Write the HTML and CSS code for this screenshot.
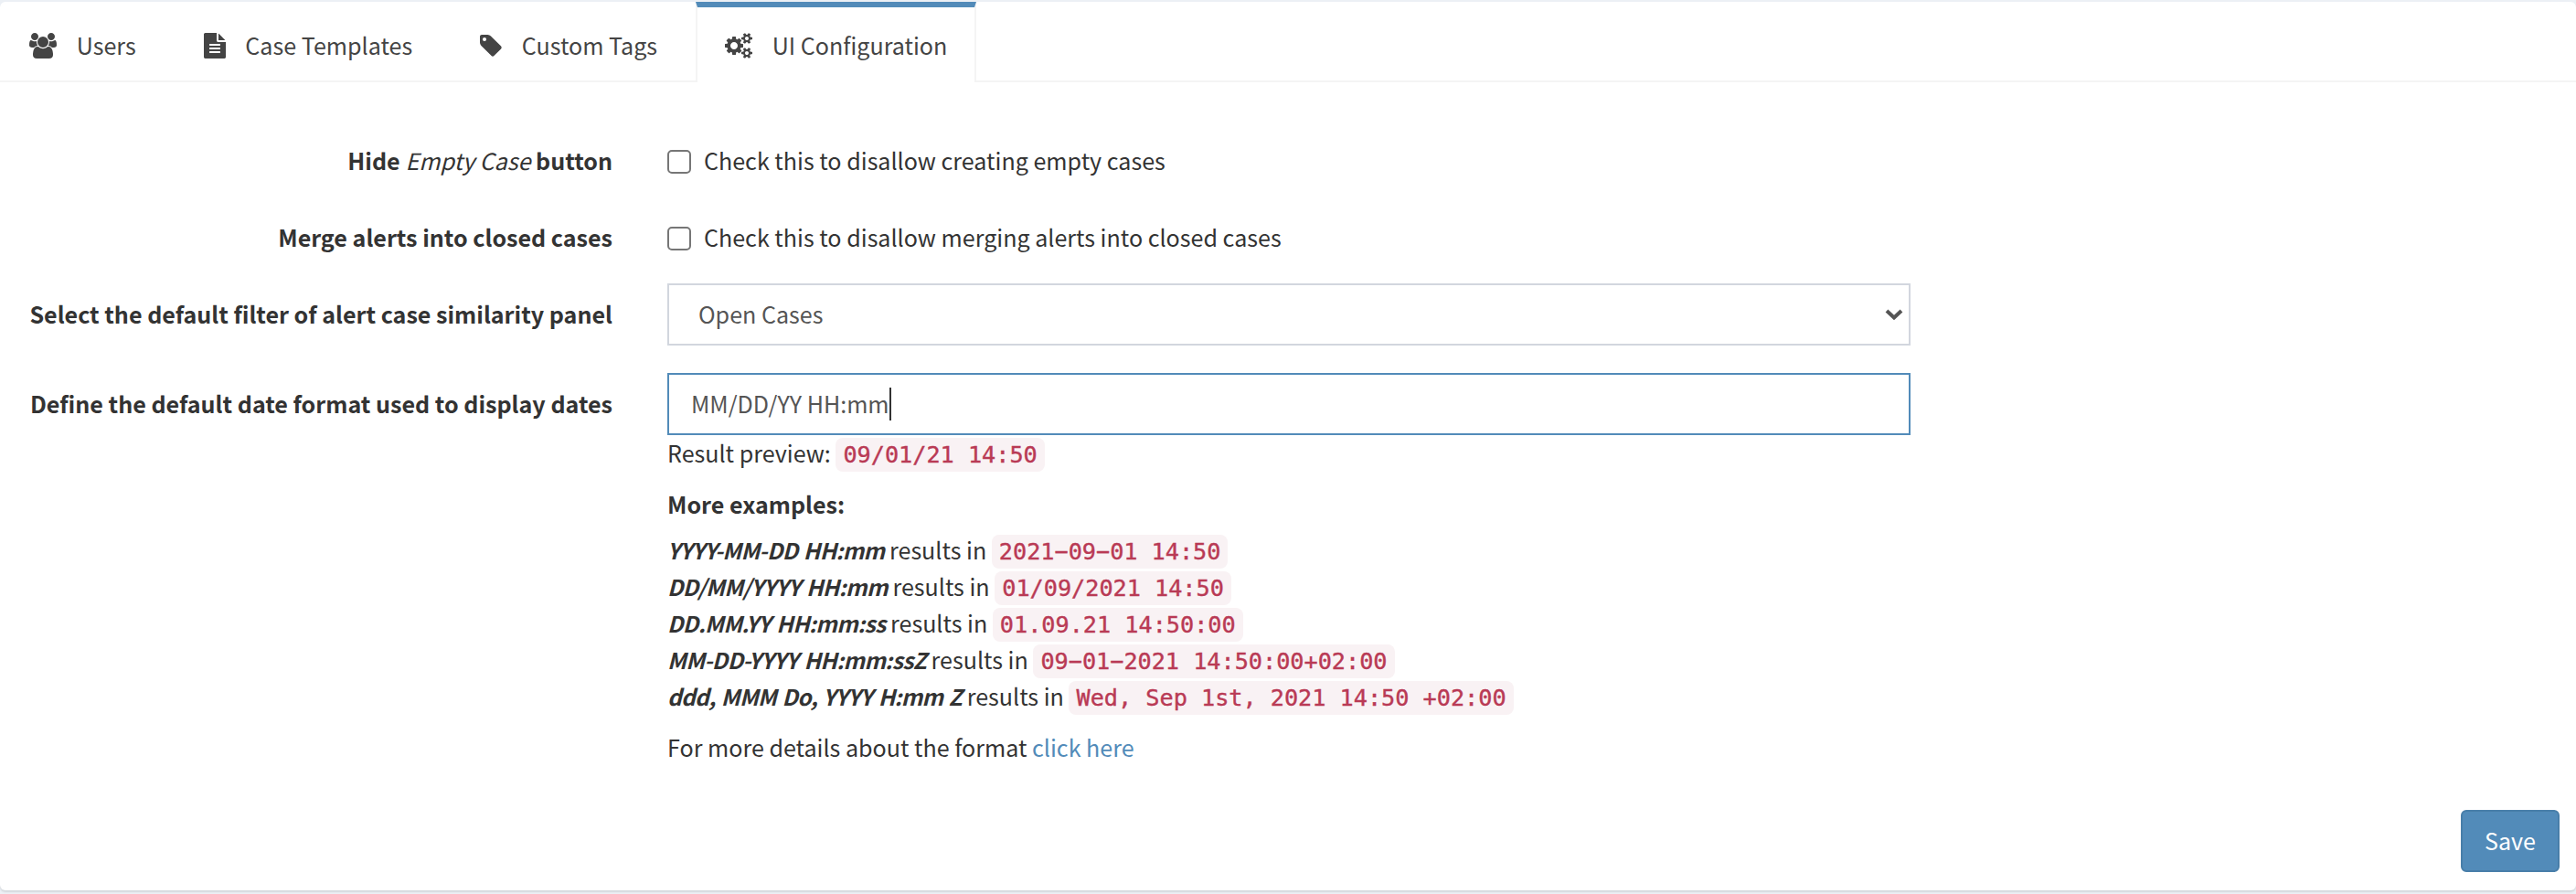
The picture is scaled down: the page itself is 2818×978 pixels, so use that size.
FILE: index.html
```html
<!DOCTYPE html>
<html lang="en">
<head>
<meta charset="utf-8">
<title>UI Configuration</title>
<link rel="stylesheet" href="styles.css">
</head>
<body>
<main class="panel">
  <nav class="tabs">
    <a class="tab">
      <svg class="icon icon-wide" viewBox="-64 0 1920 1792"><path d="M529 896q-162 5-265 128h-134q-82 0-138-40.500t-56-118.500q0-353 124-353 6 0 43.500 21t97.500 42.500 119 21.500q67 0 133-23-5 37-5 66 0 139 81 256zm1071 637q0 120-73 189.500t-194 69.500h-874q-121 0-194-69.500t-73-189.500q0-53 3.500-103.500t14-109 26.500-108.500 43-97.500 62-81 85.500-53.500 111.500-20q10 0 43 21.500t73 48 107 48 135 21.500 135-21.500 107-48 73-48 43-21.500q61 0 111.500 20t85.500 53.500 62 81 43 97.500 26.500 108.500 14 109 3.500 103.500zm-1024-1277q0 106-75 181t-181 75-181-75-75-181 75-181 181-75 181 75 75 181zm704 384q0 159-112.500 271.500t-271.500 112.500-271.500-112.500-112.500-271.500 112.500-271.500 271.500-112.500 271.500 112.500 112.500 271.500zm576 225q0 78-56 118.500t-138 40.500h-134q-103-123-265-128 81-117 81-256 0-29-5-66 66 23 133 23 59 0 119-21.500t97.500-42.500 43.500-21q124 0 124 353zm-128-609q0 106-75 181t-181 75-181-75-75-181 75-181 181-75 181 75 75 181z"/></svg>
      <span>Users</span>
    </a>
    <a class="tab">
      <svg class="icon" viewBox="128 0 1536 1792"><path d="M1596 476q14 14 28 36h-472v-472q22 14 36 28zm-476 164h544v1056q0 40-28 68t-68 28h-1344q-40 0-68-28t-28-68v-1600q0-40 28-68t68-28h800v544q0 40 28 68t68 28zm160 736v-64q0-14-9-23t-23-9h-704q-14 0-23 9t-9 23v64q0 14 9 23t23 9h704q14 0 23-9t9-23zm0-256v-64q0-14-9-23t-23-9h-704q-14 0-23 9t-9 23v64q0 14 9 23t23 9h704q14 0 23-9t9-23zm0-256v-64q0-14-9-23t-23-9h-704q-14 0-23 9t-9 23v64q0 14 9 23t23 9h704q14 0 23-9t9-23z"/></svg>
      <span>Case Templates</span>
    </a>
    <a class="tab">
      <svg class="icon" viewBox="128 0 1536 1792"><path d="M576 448q0-53-37.500-90.500t-90.500-37.500-90.500 37.500-37.500 90.500 37.500 90.500 90.500 37.500 90.500-37.500 37.500-90.500zm1067 576q0 53-37 90l-491 492q-39 37-91 37-53 0-90-37l-715-716q-38-37-64.500-101t-26.500-117v-416q0-52 38-90t90-38h416q53 0 117 26.500t102 64.500l715 714q37 39 37 91z"/></svg>
      <span>Custom Tags</span>
    </a>
    <a class="tab active">
      <svg class="icon icon-wide" viewBox="-64 0 1920 1792"><path d="M832 896q0-106-75-181t-181-75-181 75-75 181 75 181 181 75 181-75 75-181zm768 512q0-52-38-90t-90-38-90 38-38 90q0 53 37.500 90.500t90.500 37.500 90.500-37.500 37.500-90.500zm0-1024q0-52-38-90t-90-38-90 38-38 90q0 53 37.500 90.500t90.500 37.500 90.500-37.500 37.500-90.500zm-384 421v185q0 10-7 19.500t-16 10.500l-155 24q-11 35-32 76 34 48 90 115 7 11 7 20 0 12-7 19-23 30-82.500 89.500t-78.500 59.500q-11 0-21-7l-115-90q-37 19-77 31-11 108-23 155-7 24-30 24h-186q-11 0-20-7.500t-10-17.500l-23-153q-34-10-75-31l-118 89q-7 7-20 7-11 0-21-8-144-133-144-160 0-9 7-19 10-14 41-53t47-61q-23-44-35-82l-152-24q-10-1-17-9.500t-7-19.500v-185q0-10 7-19.500t16-10.500l155-24q11-35 32-76-34-48-90-115-7-11-7-20 0-12 7-20 22-30 82-89t79-59q11 0 21 7l115 90q34-18 77-32 11-108 23-154 7-24 30-24h186q11 0 20 7.500t10 17.500l23 153q34 10 75 31l118-89q8-7 20-7 11 0 21 8 144 133 144 160 0 8-7 19-12 16-42 54t-45 60q23 48 34 82l152 23q10 2 17 10.500t7 19.500zm640 533v140q0 16-149 31-12 27-30 52 51 113 51 138 0 4-4 7-122 71-124 71-8 0-46-47t-52-68q-20 2-30 2t-30-2q-14 21-52 68t-46 47q-2 0-124-71-4-3-4-7 0-25 51-138-18-25-30-52-149-15-149-31v-140q0-16 149-31 13-29 30-52-51-113-51-138 0-4 4-7 4-2 35-20t59-34 30-16q8 0 46 46.500t52 67.500q20-2 30-2t30 2q51-71 92-112l6-2q4 0 124 70 4 3 4 7 0 25-51 138 17 23 30 52 149 15 149 31zm0-1024v140q0 16-149 31-12 27-30 52 51 113 51 138 0 4-4 7-122 71-124 71-8 0-46-47t-52-68q-20 2-30 2t-30-2q-14 21-52 68t-46 47q-2 0-124-71-4-3-4-7 0-25 51-138-18-25-30-52-149-15-149-31v-140q0-16 149-31 13-29 30-52-51-113-51-138 0-4 4-7 4-2 35-20t59-34 30-16q8 0 46 46.500t52 67.500q20-2 30-2t30 2q51-71 92-112l6-2q4 0 124 70 4 3 4 7 0 25-51 138 17 23 30 52 149 15 149 31z"/></svg>
      <span>UI Configuration</span>
    </a>
  </nav>

  <form class="form">
    <div class="row row-check">
      <div class="label">Hide <em>Empty Case</em> button</div>
      <label class="check"><span class="box"></span><span>Check this to disallow creating empty cases</span></label>
    </div>
    <div class="row row-check">
      <div class="label">Merge alerts into closed cases</div>
      <label class="check"><span class="box"></span><span>Check this to disallow merging alerts into closed cases</span></label>
    </div>
    <div class="row row-select">
      <div class="label">Select the default filter of alert case similarity panel</div>
      <div class="control select">
        <span>Open Cases</span>
        <svg class="chevron" viewBox="0 0 20 12"><path d="M2 2l8 7.500 8-7.500"/></svg>
      </div>
    </div>
    <div class="row row-input">
      <div class="label">Define the default date format used to display dates</div>
      <div>
        <div class="control input"><span>MM/DD/YY HH:mm</span><span class="caret"></span></div>
        <div class="preview">Result preview: <code>09/01/21 14:50</code></div>
        <div class="heading">More examples:</div>
        <div class="examples">
          <div><b class="tight">YYYY-MM-DD HH:mm</b> results in <code>2021−09−01 14:50</code></div>
          <div><b>DD/MM/YYYY HH:mm</b> results in <code>01/09/2021 14:50</code></div>
          <div><b>DD.MM.YY HH:mm:ss</b> results in <code>01.09.21 14:50:00</code></div>
          <div><b>MM-DD-YYYY HH:mm:ssZ</b> results in <code>09−01−2021 14:50:00+02:00</code></div>
          <div><b class="tight">ddd, MMM Do, YYYY H:mm Z</b> results in <code>Wed, Sep 1st, 2021 14:50 +02:00</code></div>
        </div>
        <div class="more">For more details about the format <a class="link">click here</a></div>
      </div>
    </div>
    <div class="actions"><button type="button" class="save">Save</button></div>
  </form>
</main>
</body>
</html>
```
FILE: styles.css
```css
* { box-sizing: border-box; }
body {
  margin: 0;
  padding-top: 2px;
  height: 978px;
  overflow: hidden;
  background: #ecf0f5;
  color: #333;
  font: 25.080px/40px "Noto Sans CJK SC", sans-serif;
  white-space: nowrap;
}
.panel {
  width: 2818px;
  height: 972px;
  background: #fff;
  border-radius: 6px;
  box-shadow: 0 2px 2px rgba(0, 0, 0, .1);
}
.tabs {
  display: flex;
  gap: 10px;
  height: 88px;
  border-bottom: 2px solid #f4f4f4;
}
.tab {
  display: flex;
  align-items: flex-start;
  gap: 21.700px;
  height: 88px;
  padding: 21px 30px 0;
  border: 0 solid transparent;
  border-width: 6px 2px 0;
  color: #444;
}
.tab.active {
  background: #fff;
  border-color: #528bb9 #f4f4f4 transparent;
}
.icon {
  flex: none;
  width: 24px;
  height: 28px;
  margin-top: 7px;
  fill: #444;
  fill-rule: evenodd;
}
.icon-wide { width: 30px; }
.form { padding: 65px 18px 0 0; }
.row {
  display: grid;
  grid-template-columns: 670px 1360px;
  column-gap: 60px;
}
.row-check { margin-bottom: 44px; }
.row-check + .row-select { margin-top: -13px; }
.row-select { margin-bottom: 30px; }
.row-select .label, .row-input .label { padding-top: 13px; }
.label { text-align: right; font-weight: 700; }
.label em { font-weight: 400; }
.check { display: flex; gap: 14px; }
.box {
  width: 26px;
  height: 26px;
  margin-top: 9px;
  border: 2px solid #767676;
  border-radius: 5px;
}
.control {
  display: flex;
  height: 68px;
  border: 2px solid #d2d6de;
  color: #555;
  padding-top: 11px;
}
.select { padding-left: 32px; justify-content: space-between; }
.chevron {
  width: 20px;
  height: 12px;
  margin: 15px 6px 0 0;
  fill: none;
  stroke: #555;
  stroke-width: 4;
}
.input { padding-left: 24px; border-color: #528bb9; }
.caret { width: 2px; height: 36px; margin-top: 3px; background: #333; }
.preview { margin-top: -1px; }
.heading { margin-top: 16px; font-weight: 700; }
.examples { margin-top: 10px; }
.examples b {
  font-size: 24.400px;
  font-style: italic;
  line-height: 1;
  letter-spacing: -.600px;
  word-spacing: 1.500px;
}
.examples .tight { letter-spacing: -.660px; }
.more { margin-top: 16px; }
.link { color: #528bb9; }
code {
  padding: 4px 8px;
  border-radius: 8px;
  background: #f9f2f4;
  color: #b93a55;
  font: 25.2px/1 "DejaVu Sans Mono", monospace;
  -webkit-text-stroke: .4px #b93a55;
}
.actions { display: flex; justify-content: flex-end; margin-top: 49px; }
.save {
  width: 108px;
  height: 68px;
  padding: 0 0 2px;
  border: 2px solid #487ea9;
  border-radius: 6px;
  background: #528bb9;
  color: #fff;
  font: inherit;
}
```
